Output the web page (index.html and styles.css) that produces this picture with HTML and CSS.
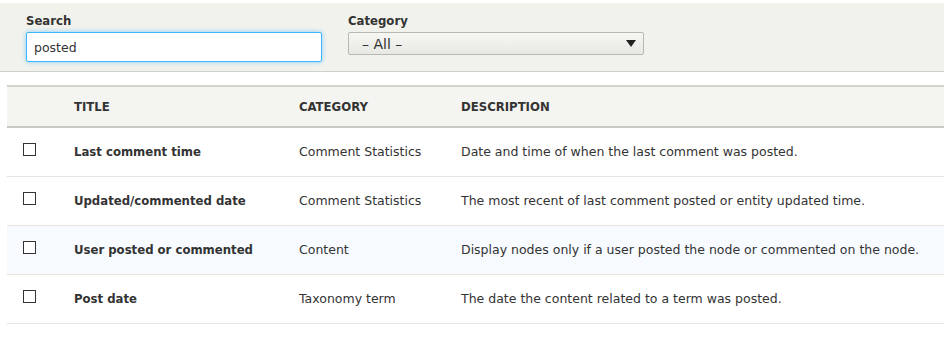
FILE: index.html
```html
<!DOCTYPE html>
<html lang="en">
<head>
    <meta charset="UTF-8">
    <title>Add fields</title>
    <link rel="stylesheet" href="styles.css">
</head>
<body>
    <div class="filters">
        <div class="filter-item">
            <label for="search">Search</label>
            <input type="text" id="search" class="form-text" value="posted">
        </div>
        <div class="filter-item">
            <label for="category">Category</label>
            <div class="form-select">
                <span>– All –</span>
                <span class="arrow"></span>
            </div>
        </div>
    </div>

    <table class="field-table">
        <colgroup>
            <col class="col-check">
            <col class="col-title">
            <col class="col-category">
            <col>
        </colgroup>
        <thead>
            <tr>
                <th></th>
                <th>Title</th>
                <th>Category</th>
                <th>Description</th>
            </tr>
        </thead>
        <tbody>
            <tr>
                <td><span class="checkbox"></span></td>
                <td class="title">Last comment time</td>
                <td>Comment Statistics</td>
                <td>Date and time of when the last comment was posted.</td>
            </tr>
            <tr>
                <td><span class="checkbox"></span></td>
                <td class="title">Updated/commented date</td>
                <td>Comment Statistics</td>
                <td>The most recent of last comment posted or entity updated time.</td>
            </tr>
            <tr class="hover">
                <td><span class="checkbox"></span></td>
                <td class="title">User posted or commented</td>
                <td>Content</td>
                <td>Display nodes only if a user posted the node or commented on the node.</td>
            </tr>
            <tr>
                <td><span class="checkbox"></span></td>
                <td class="title">Post date</td>
                <td>Taxonomy term</td>
                <td>The date the content related to a term was posted.</td>
            </tr>
        </tbody>
    </table>
</body>
</html>
```

FILE: styles.css
```css
* {
    margin: 0;
    padding: 0;
    box-sizing: border-box;
}

body {
    font-family: "DejaVu Sans", Verdana, sans-serif;
    font-size: 12.5px;
    color: #333;
    background: #fff;
    padding-top: 3px;
}

.filters {
    display: flex;
    gap: 26px;
    background-color: #f2f2ed;
    border-bottom: 1px solid #cfcfca;
    padding: 10px 26px 8px;
    height: 69px;
}

.filter-item label {
    display: block;
    font-family: "DejaVu Sans Condensed", "DejaVu Sans", sans-serif;
    font-weight: bold;
    font-size: 13px;
    margin-bottom: 4px;
}

.form-text {
    width: 296px;
    height: 30px;
    padding: 4px 7px;
    font-family: inherit;
    font-size: 12.5px;
    color: #333;
    border: 1px solid #40b6ff;
    border-radius: 2px;
    box-shadow: 0 0 5px rgba(64, 182, 255, 0.6);
    outline: none;
}

.form-select {
    width: 296px;
    height: 23px;
    margin-top: 1px;
    display: flex;
    align-items: center;
    justify-content: space-between;
    padding: 0 7px 0 13px;
    background: linear-gradient(#f6f6f3, #e8e8e3);
    border: 1px solid #b8b8b2;
    border-radius: 2px;
    font-size: 14px;
}

.arrow {
    width: 0;
    height: 0;
    border-left: 5px solid transparent;
    border-right: 5px solid transparent;
    border-top: 7px solid #222;
}

.field-table {
    margin: 13px 0 0 7px;
    width: 937px;
    border-collapse: collapse;
    table-layout: fixed;
}

.col-check { width: 55px; }
.col-title { width: 225px; }
.col-category { width: 162px; }

.field-table th {
    background-color: #f4f4f0;
    text-align: left;
    font-family: "DejaVu Sans Condensed", "DejaVu Sans", sans-serif;
    font-size: 13px;
    font-weight: bold;
    text-transform: uppercase;
    height: 41px;
    padding: 0 12px;
    border-top: 2px solid #d3d3ce;
    border-bottom: 2px solid #c8c8c3;
}

.field-table td {
    height: 49px;
    padding: 0 12px;
    border-bottom: 1px solid #e6e4df;
    white-space: nowrap;
}

.field-table td:first-child,
.field-table th:first-child {
    padding-left: 16px;
}

.field-table td.title {
    font-family: "DejaVu Sans Condensed", "DejaVu Sans", sans-serif;
    font-size: 13px;
    font-weight: bold;
}

.field-table tr.hover td {
    background-color: #f7fbff;
}

.checkbox {
    display: block;
    width: 13px;
    height: 13px;
    border: 1px solid #333;
    background: #fff;
    margin-top: -5px;
}
```
